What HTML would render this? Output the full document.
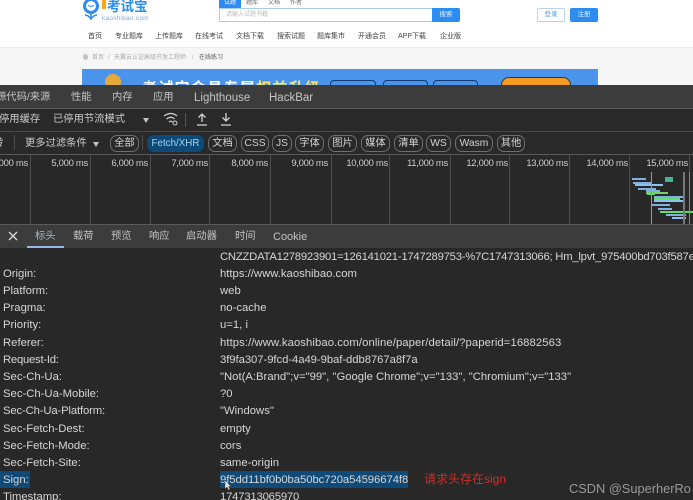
<!DOCTYPE html>
<html><head><meta charset="utf-8">
<style>
html,body{margin:0;padding:0;width:693px;height:500px;overflow:hidden;background:#fff}
body{position:relative;font-family:"Liberation Sans","Noto Sans CJK SC",sans-serif}
.a{position:absolute;white-space:nowrap}
.n{top:32px;font-size:7px;color:#444;line-height:10px}
.t{top:90px;font-size:10.3px;color:#c6c6c6;line-height:16px}
.l{font-size:11.5px}
.d{left:0;width:693px;height:1px;position:absolute}
.p{top:135px;height:17px;line-height:15px;box-sizing:border-box;border:1px solid #6e6e6e;border-radius:7px;font-size:10.3px;color:#d2d2d2;text-align:center}
.m{top:157px;font-size:9.5px;letter-spacing:-.3px;color:#cccccc;line-height:14px;text-align:right;width:60px}
.v{position:absolute;top:155px;width:1px;height:69px;background:#4d4d4d}
.h{top:229px;font-size:10.3px;color:#c2c2c2;line-height:16px}
.k,.w{font-size:11.3px;color:#d6d6d6;line-height:16px}
.k{left:3px}.w{left:220px}
.b{position:absolute;height:2px}
.s{font-size:10.3px;color:#cccccc;line-height:16px}
</style></head><body>
<div class="a" style="left:0;top:47px;width:693px;height:38px;background:#f6f6f6"></div>
<div class="a" style="left:0;top:47px;width:693px;height:1px;background:#ececec"></div>

<svg class="a" style="left:81px;top:0" width="22" height="22" viewBox="0 0 22 22"><circle cx="10" cy="6" r="6.5" fill="none" stroke="#2d8cf0" stroke-width="3"/><path d="M7 5q3 3 6 0" fill="none" stroke="#2d8cf0" stroke-width="1"/><path d="M10 13v7M4 15q3 0 5 3M16 15q-3 0-5 3" fill="none" stroke="#2d8cf0" stroke-width="1.6"/></svg>
<div class="a" style="left:102px;top:0;width:4px;height:9px;background:#f5a623"></div>
<div class="a" style="left:107px;top:-1px;font-size:13.5px;font-weight:bold;color:#2d8cf0;line-height:16px">考试宝</div>
<div class="a" style="left:102px;top:15px;font-size:6.3px;color:#7aa9d8;line-height:8px;letter-spacing:.35px">kaoshibao.com</div>

<div class="a" style="left:219px;top:0;width:22px;height:8px;background:#2d8cf0;color:#fff;font-size:6px;line-height:7px;text-align:center">试题</div>
<div class="a" style="left:246px;top:0;font-size:6px;color:#666;line-height:7px">题库</div>
<div class="a" style="left:268px;top:0;font-size:6px;color:#666;line-height:7px">文档</div>
<div class="a" style="left:290px;top:0;font-size:6px;color:#666;line-height:7px">作者</div>
<div class="a" style="left:219px;top:8px;width:214px;height:14px;box-sizing:border-box;border:1px solid #a9cdf0;background:#fff"></div>
<div class="a" style="left:226px;top:11px;font-size:6px;color:#bbb;line-height:8px">请输入试题书籍</div>
<div class="a" style="left:432px;top:8px;width:28px;height:14px;background:#2d8cf0;color:#e4f0ff;font-size:6.5px;line-height:14px;text-align:center;border-radius:0 2px 2px 0">搜索</div>
<div class="a" style="left:537px;top:8px;width:28px;height:14px;box-sizing:border-box;border:1px solid #b8d4ee;color:#5a9be0;font-size:6.5px;line-height:12px;text-align:center;border-radius:2px">登录</div>
<div class="a" style="left:570px;top:8px;width:28px;height:14px;background:#2d8cf0;color:#e4f0ff;font-size:6.5px;line-height:14px;text-align:center;border-radius:2px">注册</div>

<div class="a n" style="left:88px">首页</div>
<div class="a n" style="left:115px">专业题库</div>
<div class="a n" style="left:155px">上传题库</div>
<div class="a n" style="left:195px">在线考试</div>
<div class="a n" style="left:236px">文档下载</div>
<div class="a n" style="left:277px">搜索试题</div>
<div class="a n" style="left:317px">题库集市</div>
<div class="a n" style="left:358px">开通会员</div>
<div class="a n" style="left:398px">APP下载</div>
<div class="a n" style="left:440px">企业版</div>

<div class="a" style="left:83px;top:54px;width:5px;height:6px;border-radius:50%;background:#c4c4c4"></div>
<div class="a" style="left:92px;top:54px;font-size:6px;color:#aaa;line-height:8px">首页</div>
<div class="a" style="left:108px;top:54px;font-size:6px;color:#aaa;line-height:8px">/</div>
<div class="a" style="left:114px;top:54px;font-size:6px;color:#aaa;line-height:8px">天翼云认证高级开发工程师</div>
<div class="a" style="left:192px;top:54px;font-size:6px;color:#aaa;line-height:8px">/</div>
<div class="a" style="left:199px;top:54px;font-size:6px;color:#555;line-height:8px">在线练习</div>

<div class="a" style="left:82px;top:69px;width:516px;height:16px;background:#4a94ec;overflow:hidden">
<div class="a" style="left:23px;top:5px;width:16px;height:16px;border-radius:50%;background:#e8a93b"></div>
<div class="a" style="left:60px;top:11px;font-size:15px;font-weight:bold;color:#fff;line-height:18px;letter-spacing:1.3px">考试宝会员专属<span style="color:#ffe66b">权益升级</span></div>
<div class="a" style="left:248px;top:11px;width:44px;height:10px;border:1px solid #103a70;border-radius:4px"></div>
<div class="a" style="left:301px;top:11px;width:43px;height:10px;border:1px solid #103a70;border-radius:4px"></div>
<div class="a" style="left:351px;top:11px;width:43px;height:10px;border:1px solid #103a70;border-radius:4px"></div>
<div class="a" style="left:419px;top:8px;width:68px;height:14px;background:#f59a23;border:1px solid #333;border-radius:8px"></div>
</div>

<div class="a" style="left:0;top:85px;width:693px;height:24px;background:#3c3c3c"></div>
<div class="a t" style="left:-4px">源代码/来源</div>
<div class="a t" style="left:71px">性能</div>
<div class="a t" style="left:112px">内存</div>
<div class="a t" style="left:153px">应用</div>
<div class="a t l" style="left:194px">Lighthouse</div>
<div class="a t l" style="left:269px">HackBar</div>
<div class="d" style="top:108px;background:#585858"></div>

<div class="a" style="left:0;top:109px;width:693px;height:22px;background:#292929"></div>
<div class="a s" style="left:-1px;top:112px">停用缓存</div>
<div class="a s" style="left:53px;top:112px">已停用节流模式</div>
<div class="a" style="left:143px;top:118px;border-left:3.5px solid transparent;border-right:3.5px solid transparent;border-top:5px solid #c4c4c4"></div>
<svg class="a" style="left:162px;top:111px" width="18" height="16" viewBox="0 0 18 16"><path d="M2 5q7-5 13 0M4.5 8q4.5-3.5 8 0M7 11q2-1.5 3.5 0" fill="none" stroke="#d0d0d0" stroke-width="1.2"/><circle cx="13" cy="12" r="2" fill="none" stroke="#d0d0d0" stroke-width="1"/></svg>
<div class="a" style="left:185px;top:113px;width:1px;height:14px;background:#555"></div>
<svg class="a" style="left:195px;top:112px" width="14" height="15" viewBox="0 0 14 15"><path d="M7 10V2M3.5 5.5L7 2l3.5 3.5M2 13h10" fill="none" stroke="#d4d4d4" stroke-width="1.3"/></svg>
<svg class="a" style="left:219px;top:112px" width="14" height="15" viewBox="0 0 14 15"><path d="M7 1v8M3.5 5.5L7 9l3.5-3.5M2 13h10" fill="none" stroke="#d4d4d4" stroke-width="1.3"/></svg>
<div class="d" style="top:131px;background:#4a4a4a"></div>

<div class="a" style="left:0;top:132px;width:693px;height:22px;background:#292929"></div>
<div class="a s" style="left:-7px;top:136px">转</div>
<div class="a" style="left:14px;top:135px;width:1px;height:15px;background:#4d4d4d"></div>
<div class="a s" style="left:25px;top:136px">更多过滤条件</div>
<div class="a" style="left:93px;top:142px;border-left:3.5px solid transparent;border-right:3.5px solid transparent;border-top:5px solid #c4c4c4"></div>
<div class="a p" style="left:110px;width:29px">全部</div>
<div class="a" style="left:142px;top:135px;width:1px;height:15px;background:#4d4d4d"></div>
<div class="a p" style="left:147px;width:57px;background:#0c4a78;border-color:#0c4a78;color:#a5d3f5;font-size:9.8px">Fetch/XHR</div>
<div class="a p" style="left:208px;width:29px">文档</div>
<div class="a p" style="left:241px;width:28px">CSS</div>
<div class="a p" style="left:272px;width:20px">JS</div>
<div class="a p" style="left:295px;width:29px">字体</div>
<div class="a p" style="left:328px;width:29px">图片</div>
<div class="a p" style="left:361px;width:29px">媒体</div>
<div class="a p" style="left:394px;width:29px">清单</div>
<div class="a p" style="left:426px;width:25px">WS</div>
<div class="a p" style="left:455px;width:38px">Wasm</div>
<div class="a p" style="left:497px;width:28px">其他</div>
<div class="d" style="top:154px;background:#5a5a5a"></div>

<div class="a" style="left:0;top:155px;width:693px;height:69px;background:#282828"></div>
<div class="v" style="left:30px"></div><div class="v" style="left:90px"></div><div class="v" style="left:150px"></div><div class="v" style="left:209px"></div><div class="v" style="left:270px"></div><div class="v" style="left:331px"></div><div class="v" style="left:389px"></div><div class="v" style="left:450px"></div><div class="v" style="left:509px"></div><div class="v" style="left:569px"></div><div class="v" style="left:629px"></div><div class="v" style="left:689px"></div>
<div class="a m" style="left:-32px">000 ms</div>
<div class="a m" style="left:28px">5,000 ms</div>
<div class="a m" style="left:88px">6,000 ms</div>
<div class="a m" style="left:148px">7,000 ms</div>
<div class="a m" style="left:208px">8,000 ms</div>
<div class="a m" style="left:268px">9,000 ms</div>
<div class="a m" style="left:328px">10,000 ms</div>
<div class="a m" style="left:388px">11,000 ms</div>
<div class="a m" style="left:448px">12,000 ms</div>
<div class="a m" style="left:508px">13,000 ms</div>
<div class="a m" style="left:568px">14,000 ms</div>
<div class="a m" style="left:628px">15,000 ms</div>

<div class="b" style="left:632px;top:178px;width:14px;background:#7fb0e0"></div>
<div class="b" style="left:633px;top:182px;width:18px;background:#7fb0e0"></div>
<div class="b" style="left:635px;top:184px;width:28px;background:#8fc0ee"></div>
<div class="b" style="left:638px;top:188px;width:18px;background:#7fb0e0"></div>
<div class="b" style="left:646px;top:190px;width:14px;background:#7fb0e0"></div>
<div class="b" style="left:646px;top:192px;width:22px;background:#6fd06f"></div>
<div class="b" style="left:647px;top:193px;width:8px;background:#6fd06f"></div>
<div class="b" style="left:654px;top:196px;width:30px;background:#7fb0e0"></div>
<div class="b" style="left:654px;top:198px;width:26px;background:#5fe06f"></div>
<div class="b" style="left:654px;top:200px;width:30px;background:#8fc0ee"></div>
<div class="b" style="left:652px;top:204px;width:18px;background:#7fb0e0"></div>
<div class="b" style="left:658px;top:208px;width:14px;background:#7fb0e0"></div>
<div class="b" style="left:660px;top:211px;width:33px;background:#5fe06f"></div>
<div class="b" style="left:666px;top:214px;width:20px;background:#7fb0e0"></div>
<div class="b" style="left:672px;top:217px;width:14px;background:#8fc0ee"></div>
<div class="a" style="left:665px;top:177px;width:8px;height:5px;background:#3fb89a"></div>
<div class="a" style="left:651px;top:172px;width:1px;height:52px;background:#e8805a"></div>
<div class="a" style="left:683px;top:172px;width:2px;height:52px;background:#777"></div>
<div class="a" style="left:689px;top:172px;width:1px;height:52px;background:#8a8a8a"></div>

<div class="a" style="left:0;top:224px;width:693px;height:24px;background:#3c3c3c"></div>
<div class="d" style="top:224px;background:#5a5a5a"></div>
<svg class="a" style="left:8px;top:231px" width="10" height="10" viewBox="0 0 10 10"><path d="M1 1l8 8M9 1l-8 8" stroke="#dcdcdc" stroke-width="1.3" fill="none"/></svg>
<div class="a h" style="left:35px;color:#a9b6cc">标头</div>
<div class="a" style="left:27px;top:246px;width:37px;height:2px;background:#9db4e8"></div>
<div class="a h" style="left:73px">载荷</div>
<div class="a h" style="left:111px">预览</div>
<div class="a h" style="left:149px">响应</div>
<div class="a h" style="left:186px">启动器</div>
<div class="a h" style="left:235px">时间</div>
<div class="a h" style="left:273px;font-size:11px">Cookie</div>

<div class="a" style="left:0;top:248px;width:693px;height:252px;background:#282828"></div>
<div class="a w" style="top:249px;letter-spacing:-.24px">CNZZDATA1278923901=126141021-1747289753-%7C1747313066; Hm_lpvt_975400bd703f587e</div>
<div class="a k" style="top:266px">Origin:</div><div class="a w" style="top:266px">https://www.kaoshibao.com</div>
<div class="a k" style="top:283px">Platform:</div><div class="a w" style="top:283px">web</div>
<div class="a k" style="top:300px">Pragma:</div><div class="a w" style="top:300px">no-cache</div>
<div class="a k" style="top:317px">Priority:</div><div class="a w" style="top:317px">u=1, i</div>
<div class="a k" style="top:335px">Referer:</div><div class="a w" style="top:335px;letter-spacing:.08px">https://www.kaoshibao.com/online/paper/detail/?paperid=16882563</div>
<div class="a k" style="top:352px;letter-spacing:-.25px">Request-Id:</div><div class="a w" style="top:352px;letter-spacing:-.06px">3f9fa307-9fcd-4a49-9baf-ddb8767a8f7a</div>
<div class="a k" style="top:369px">Sec-Ch-Ua:</div><div class="a w" style="top:369px">"Not(A:Brand";v="99", "Google Chrome";v="133", "Chromium";v="133"</div>
<div class="a k" style="top:386px">Sec-Ch-Ua-Mobile:</div><div class="a w" style="top:386px">?0</div>
<div class="a k" style="top:403px;letter-spacing:-.15px">Sec-Ch-Ua-Platform:</div><div class="a w" style="top:403px">"Windows"</div>
<div class="a k" style="top:421px">Sec-Fetch-Dest:</div><div class="a w" style="top:421px">empty</div>
<div class="a k" style="top:438px">Sec-Fetch-Mode:</div><div class="a w" style="top:438px">cors</div>
<div class="a k" style="top:455px">Sec-Fetch-Site:</div><div class="a w" style="top:455px">same-origin</div>
<div class="a" style="left:0;top:471px;width:30px;height:17px;background:#0f4a78"></div>
<div class="a" style="left:220px;top:471px;width:188px;height:17px;background:#0f4a78"></div>
<div class="a k" style="top:472px">Sign:</div><div class="a w" style="top:472px;letter-spacing:-.06px">9f5dd11bf0b0ba50bc720a54596674f8</div>
<svg class="a" style="left:224px;top:480px" width="8" height="11" viewBox="0 0 8 11"><path d="M1 0v9l2-2 1.5 3 1.5-.7L4.500 6.500H7z" fill="#e8e8e8" stroke="#333" stroke-width=".5"/></svg>
<div class="a k" style="top:489px">Timestamp:</div><div class="a w" style="top:489px;letter-spacing:-.2px">1747313065970</div>
<div class="a" style="left:424px;top:471px;font-size:12px;color:#c9302c;line-height:16px">请求头存在sign</div>
<div class="a" style="left:569px;top:480px;font-size:12.8px;color:#9a9a9a;line-height:17px">CSDN @SuperherRo</div>
</body></html>
